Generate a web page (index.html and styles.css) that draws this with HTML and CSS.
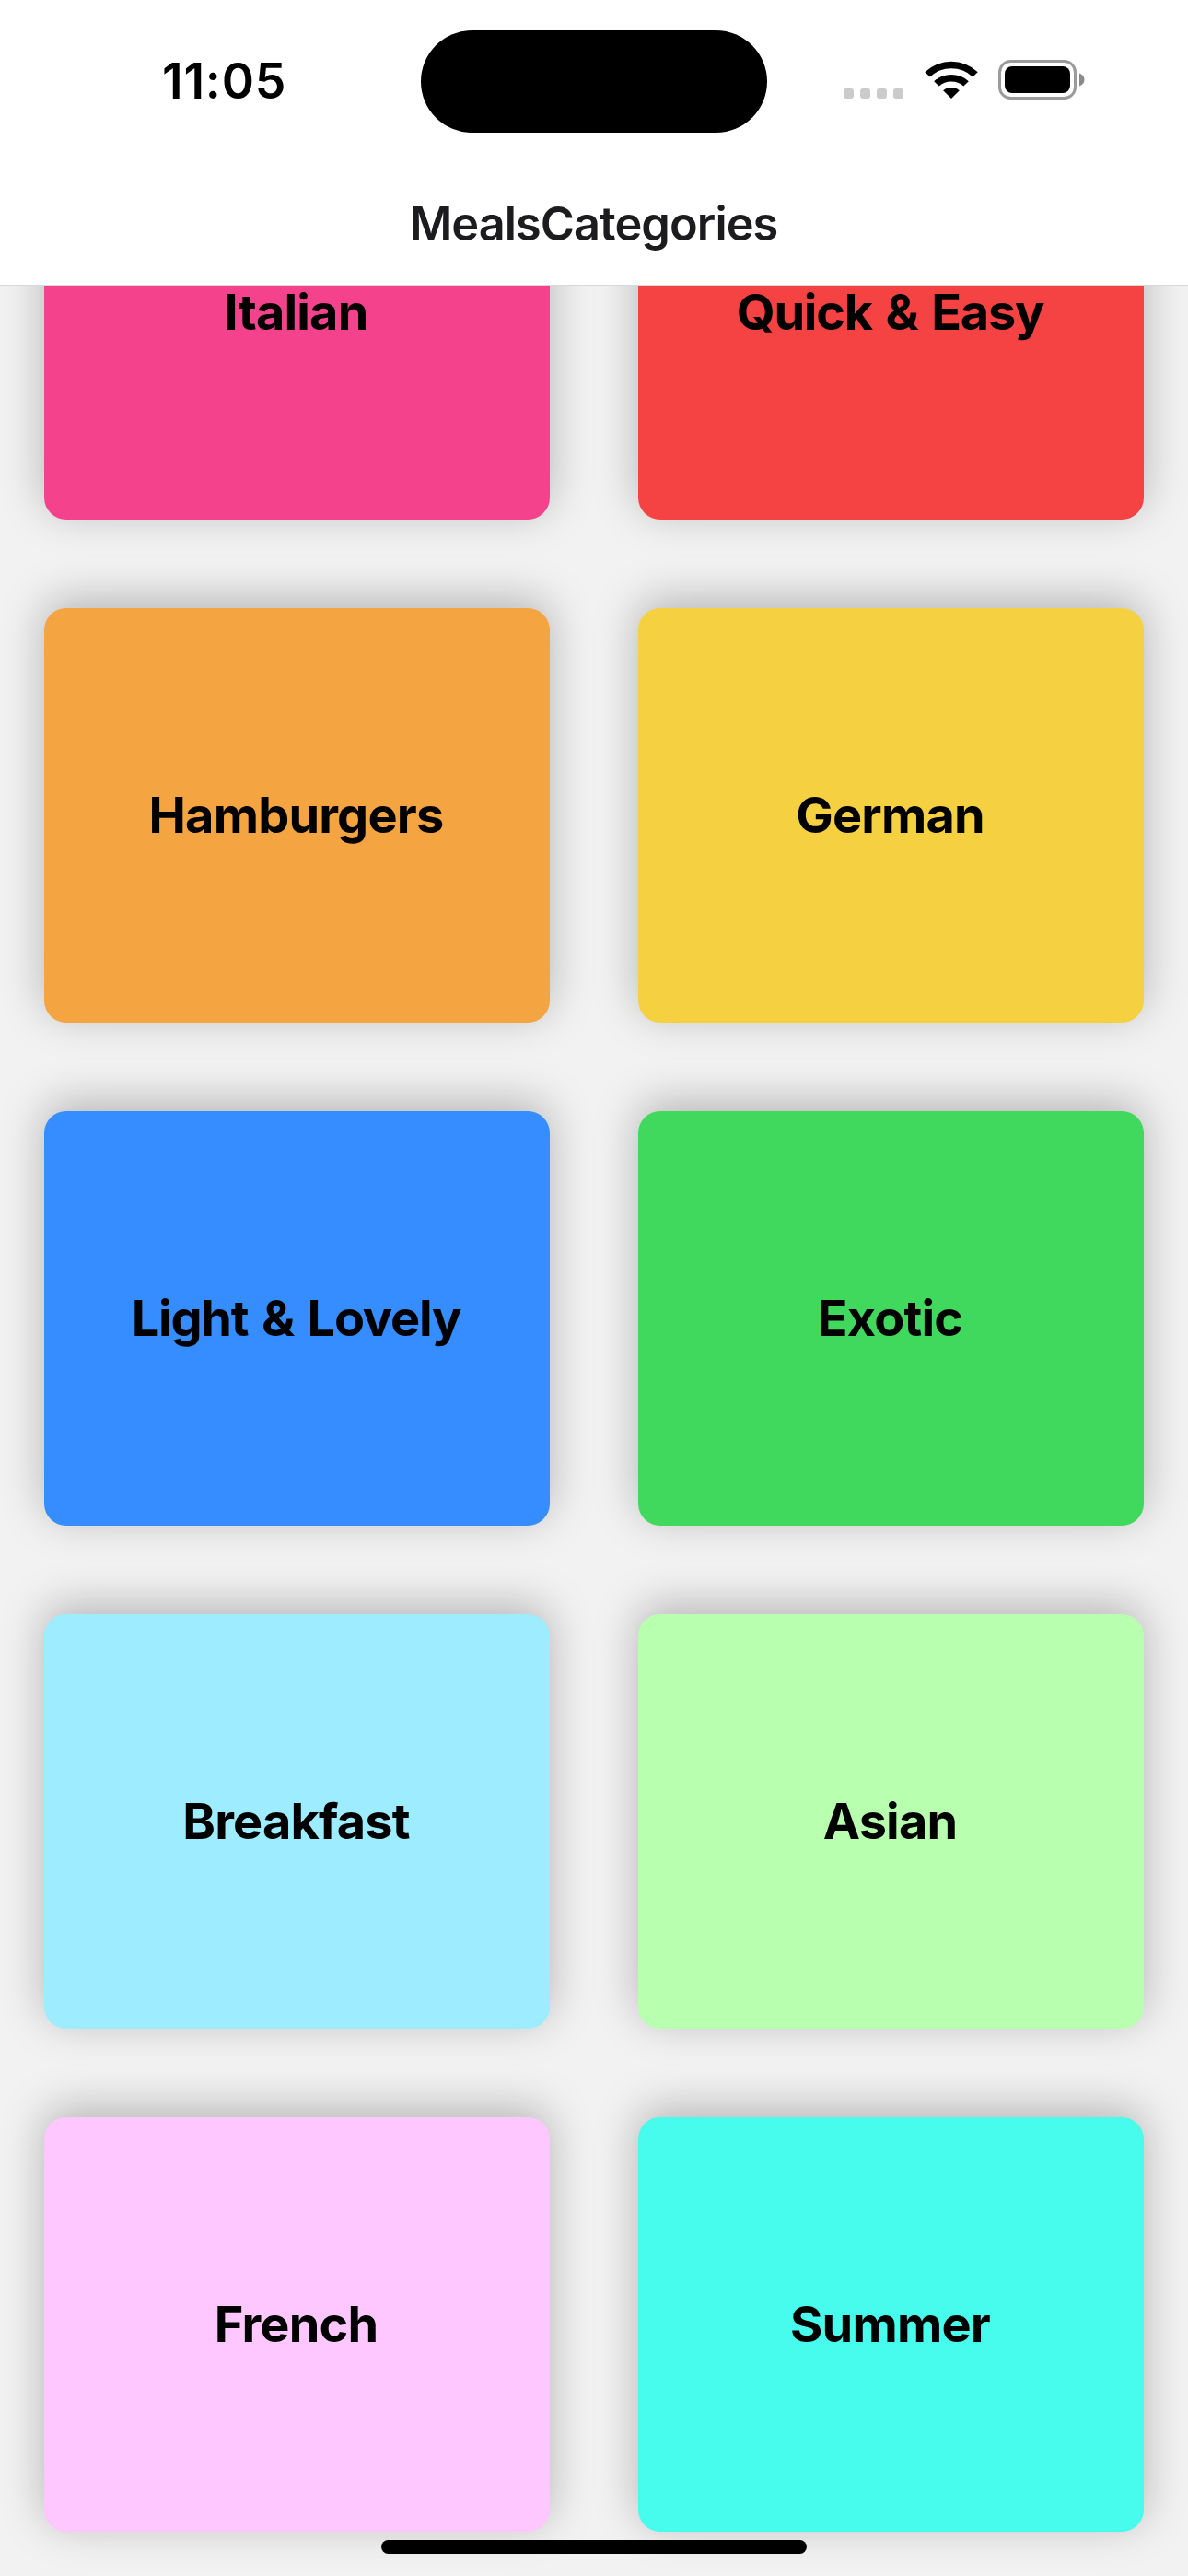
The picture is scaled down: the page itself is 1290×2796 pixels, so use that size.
FILE: index.html
```html
<!DOCTYPE html>
<html lang="en">
<head>
<meta charset="utf-8">
<title>MealsCategories</title>
<link rel="stylesheet" href="styles.css">
</head>
<body>
<div class="screen">
  <header class="header">
    <div class="status-bar">
      <div class="time">11:05</div>
      <div class="island"></div>
      <div class="status-icons">
        <svg class="signal" width="65" height="11" viewBox="0 0 65 11" fill="#cbcbcb">
          <rect width="11" height="11" rx="3"/><rect x="18" width="11" height="11" rx="3"/><rect x="36" width="11" height="11" rx="3"/><rect x="54" width="11" height="11" rx="3"/>
        </svg>
        <svg class="wifi" width="58" height="42" viewBox="0 0 58 42">
          <path d="M0.3 13.2 A41.5 41.5 0 0 1 57.7 13.2 L52.2 18.4 A34 34 0 0 0 5.8 18.4 Z"/>
          <path d="M10.2 23.2 A28 28 0 0 1 47.8 23.2 L42.3 28.6 A20 20 0 0 0 15.7 28.6 Z"/>
          <path d="M20.2 33.3 A13.5 13.5 0 0 1 37.8 33.3 L29 42 Z"/>
        </svg>
        <svg class="battery" width="94" height="43" viewBox="0 0 94 43">
          <rect x="1.5" y="1.5" width="82" height="40" rx="12" fill="none" stroke="#9b9b9b" stroke-width="3"/>
          <rect x="7" y="7" width="71" height="29" rx="8"/>
          <path d="M88 14.5 Q93.5 16.5 93.5 21.5 T88 28.5 Z" fill="#8a8a8a"/>
        </svg>
      </div>
    </div>
    <h1 class="title">MealsCategories</h1>
  </header>
  <main class="list">
    <div class="grid">
      <div class="card pink"><span class="label">Italian</span></div>
      <div class="card red"><span class="label phrase">Quick &amp; Easy</span></div>
      <div class="card orange"><span class="label">Hamburgers</span></div>
      <div class="card yellow"><span class="label">German</span></div>
      <div class="card blue"><span class="label phrase">Light &amp; Lovely</span></div>
      <div class="card green"><span class="label">Exotic</span></div>
      <div class="card sky"><span class="label">Breakfast</span></div>
      <div class="card lime"><span class="label">Asian</span></div>
      <div class="card lilac"><span class="label">French</span></div>
      <div class="card aqua"><span class="label">Summer</span></div>
    </div>
  </main>
  <div class="home-indicator"></div>
</div>
</body>
</html>
```
FILE: styles.css
```css
* { box-sizing: border-box; }

body {
  margin: 0;
  font-family: Inter, "Liberation Sans", sans-serif;
  color: #000;
}

.screen {
  position: relative;
  display: flex;
  flex-direction: column;
  width: 1290px;
  height: 2796px;
  overflow: hidden;
  background: #f2f2f2;
}

.header {
  flex: none;
  height: 310px;
  background: #fff;
  border-bottom: 1px solid #d8d8d8;
}

.status-bar {
  display: grid;
  grid-template-columns: 457px 376px 457px;
  height: 177px;
}

.time {
  padding: 57px 0 0 176px;
  font-size: 53.5px;
  line-height: 62px;
  font-weight: 600;
  letter-spacing: 0.8px;
}

.island {
  height: 111px;
  margin-top: 33px;
  border-radius: 56px;
  background: #000;
}

.status-icons {
  display: flex;
  align-items: flex-start;
  padding: 65px 0 0 83px;
}

.signal { margin-top: 31px; }
.wifi { margin-left: 23px; }
.battery { margin-left: 22px; }

.title {
  margin: 0;
  padding: 36px 1px 0 0;
  font-size: 50.5px;
  line-height: 60px;
  font-weight: 600;
  letter-spacing: -0.95px;
  text-align: center;
  color: #1c1c1e;
}

.list {
  display: flex;
  flex: 1;
  min-height: 0;
  flex-direction: column;
  justify-content: flex-end;
  overflow: hidden;
  padding: 0 48px 48px;
}

.grid {
  display: grid;
  grid-template-columns: 1fr 1fr;
  grid-auto-rows: 450px;
  gap: 96px;
}

.card {
  display: flex;
  align-items: center;
  justify-content: center;
  border-radius: 24px;
  box-shadow: 0 -9px 48px rgba(0, 0, 0, 0.26);
}

.label {
  margin-right: 2px;
  font-size: 54px;
  line-height: 64px;
  font-weight: 700;
  letter-spacing: -0.8px;
}

.phrase {
  letter-spacing: -1.2px;
  word-spacing: 3px;
}

.pink { background: #f5428d; }
.red { background: #f54242; }
.orange { background: #f5a442; }
.yellow { background: #f5d142; }
.blue { background: #368dff; }
.green { background: #41d95d; }
.sky { background: #9eecff; }
.lime { background: #b9ffb0; }
.lilac { background: #ffc7ff; }
.aqua { background: #47fced; }

.home-indicator {
  position: absolute;
  left: 414px;
  bottom: 24px;
  width: 462px;
  height: 15px;
  border-radius: 8px;
  background: #000;
}
```
